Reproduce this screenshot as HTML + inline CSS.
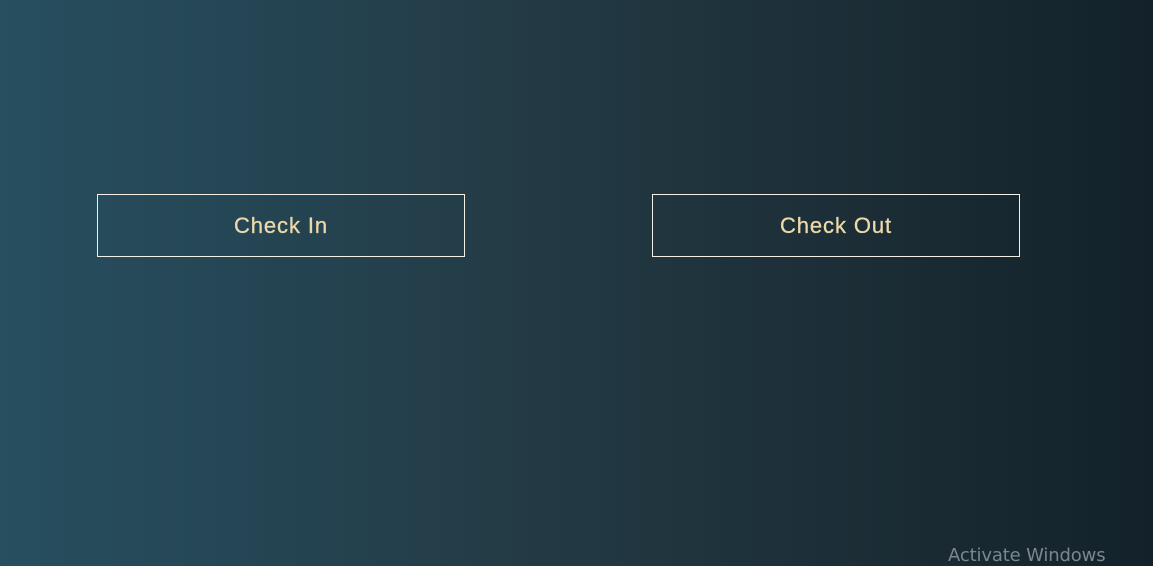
<!DOCTYPE html>
<html><head><style>
html,body{margin:0;padding:0}
body{width:1153px;height:564px;overflow:hidden;position:relative;
background:linear-gradient(to right,#274f5f 0%,#254655 20%,#233b45 45%,#1d2f38 70%,#13222a 100%);
font-family:"Liberation Sans",sans-serif}
.b{position:absolute;top:194px;width:366px;height:61px;border:1px solid #f4f0e6;box-sizing:content-box;
color:#ecd9aa;font-size:22px;letter-spacing:0.9px;display:flex;align-items:center;justify-content:center;padding-top:1px;height:60px;-webkit-text-stroke:0.3px #ecd9aa}
.w{position:absolute;left:948px;top:545px;color:#7c878c;font-size:18px;font-family:"DejaVu Sans","Liberation Sans",sans-serif;letter-spacing:-0.15px}
</style></head><body>
<div class="b" style="left:97px">Check In</div>
<div class="b" style="left:652px">Check Out</div>
<div class="w">Activate Windows</div>
</body></html>
